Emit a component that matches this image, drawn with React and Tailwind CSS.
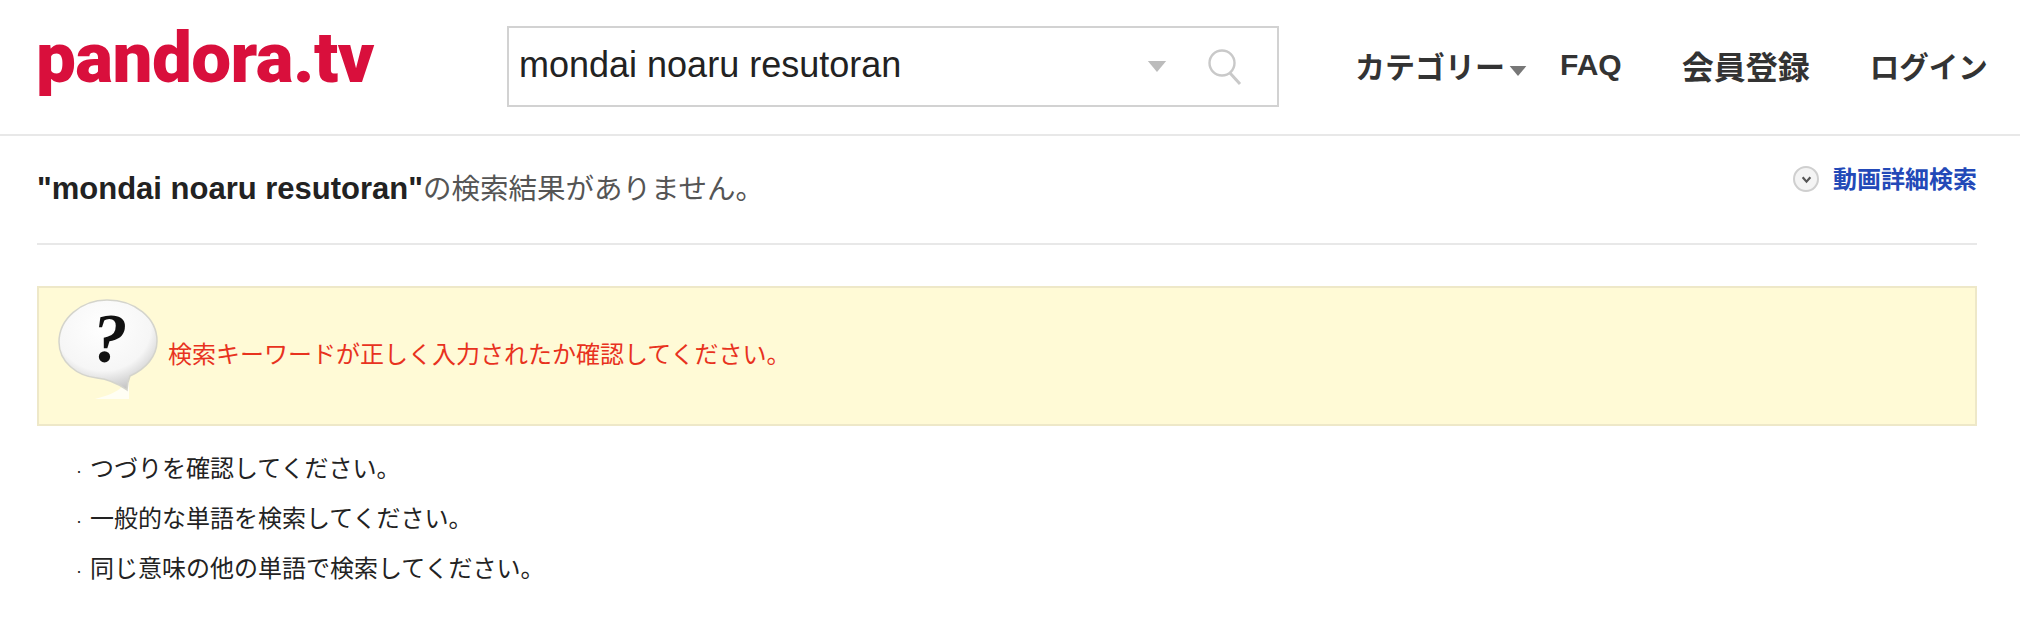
import React from "react";

const FONT = "font-['Liberation_Sans','Noto_Sans_CJK_JP',sans-serif]";

const Caret = ({ className }) => (
  <svg className={className} viewBox="0 0 20 12">
    <path d="M0 0H20L10 12Z" fill="currentColor" />
  </svg>
);

const SearchGlyph = () => (
  <svg className="h-[38px] w-[36px]" viewBox="0 0 36 38" fill="none" stroke="#c9c9c9">
    <circle cx="15" cy="15" r="12.5" strokeWidth="2.4" />
    <path d="M23 25L33 36" strokeWidth="3" />
  </svg>
);

const QuestionBubble = () => (
  <svg className="h-[102px] w-[104px] shrink-0" viewBox="0 0 104 102">
    <defs>
      <radialGradient id="bubble" cx="45%" cy="30%" r="75%">
        <stop offset="0%" stopColor="#ffffff" />
        <stop offset="65%" stopColor="#f6f6f6" />
        <stop offset="100%" stopColor="#bdbdbd" />
      </radialGradient>
    </defs>
    <path d="M38 101C50 98 60 94 66 88L72 80L72 101Z" fill="#fffef4" />
    <path
      d="M50 2C24 2 2 21 2 44C2 64 20 78 40 80C50 81 60 85 70 92C70 86 71 83 73 78C89 71 100 58 100 43C100 20 78 2 50 2Z"
      fill="url(#bubble)"
      stroke="#d4d4cc"
      strokeWidth="1.5"
    />
    <text x="53" y="64" textAnchor="middle" fontSize="70" fontWeight="700" fontStyle="italic" fill="#111" fontFamily="'Liberation Serif', serif">?</text>
  </svg>
);

const Header = () => (
  <header className="flex h-[136px] items-start border-b-2 border-[#e8e8e8]">
    <div className="ml-[36px] mt-[18px] w-[471px] text-[71px] leading-[80px] font-black tracking-[-0.6px] text-[#d90f3c] font-['Roboto',sans-serif]">
      pandora.tv
    </div>
    <div className="mt-[26px] flex h-[81px] w-[772px] items-center border-2 border-[#d2d2d2] pl-[10px] pr-[34px]">
      <span className="-mt-[3px] flex-1 text-[36px] text-[#222]">mondai noaru resutoran</span>
      <Caret className="mr-[40px] h-[11px] w-[20px] text-[#bcbcbc]" />
      <SearchGlyph />
    </div>
    <nav className="ml-[76px] mt-[48px] flex items-center text-[30px] font-bold leading-[40px] text-[#333]">
      <span>カテゴリー</span>
      <Caret className="ml-[4px] mt-[6px] h-[10px] w-[18px] text-[#777]" />
      <span className="ml-[33px] -mt-[6px]">FAQ</span>
      <span className="ml-[60px] text-[32px]">会員登録</span>
      <span className="ml-[60px] text-[29.5px]">ログイン</span>
    </nav>
  </header>
);

const Message = () => (
  <section className="mt-[41px] flex h-[140px] items-start border-2 border-[#eee8c8] bg-[#fffad6] pl-[18px] pt-[10px]">
    <QuestionBubble />
    <p className="ml-[7px] mt-[41px] text-[24px] leading-[32px] text-[#e8321e]">
      検索キーワードが正しく入力されたか確認してください。
    </p>
  </section>
);

const tips = [
  "つづりを確認してください。",
  "一般的な単語を検索してください。",
  "同じ意味の他の単語で検索してください。",
];

export default function App() {
  return (
    <div className={`h-[638px] bg-white ${FONT}`}>
      <Header />
      <main className="ml-[37px] mr-[43px]">
        <div className="flex h-[109px] items-start justify-between border-b-2 border-[#e8e8e8]">
          <h1 className="mt-[35px] text-[28.5px] leading-[36px] text-[#555]">
            <b className="text-[31px] text-[#222]">"mondai noaru resutoran"</b>の検索結果がありません。
          </h1>
          <a className="mt-[28px] flex items-center text-[24px] font-bold leading-[32px] text-[#2349b8]">
            <span className="mr-[14px] -mt-[2px] flex h-[26px] w-[26px] items-center justify-center rounded-full border-2 border-[#cfcfcf] bg-[#f4f4f4]">
              <svg className="h-[11px] w-[11px]" viewBox="0 0 10 10">
                <path d="M1.5 3L5 7L8.5 3" fill="none" stroke="#555" strokeWidth="2" />
              </svg>
            </span>
            動画詳細検索
          </a>
        </div>
        <Message />
        <ul className="ml-[39px] mt-[27px] flex flex-col gap-[16px] text-[24px] leading-[32px] text-[#222]">
          {tips.map((tip) => (
            <li key={tip}>
              <span className="mr-[8px] text-[18px]">·</span>
              {tip}
            </li>
          ))}
        </ul>
      </main>
    </div>
  );
}
